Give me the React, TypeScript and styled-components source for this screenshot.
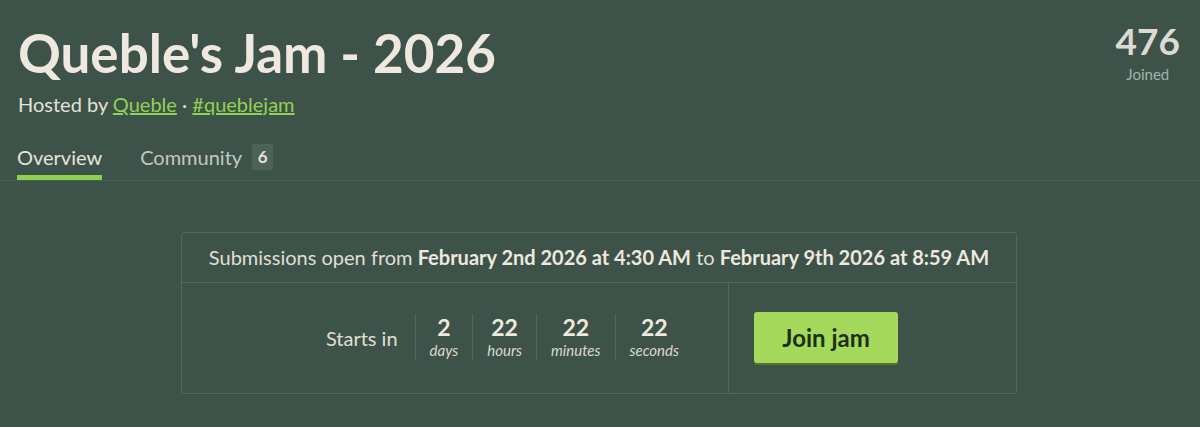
import styled, { createGlobalStyle } from "styled-components";

const GlobalStyle = createGlobalStyle`
    body {
        margin: 0;
        background-color: #3d5349;
        font-family: Lato, "Open Sans", sans-serif;
        color: #e6e1d8;
    }
`;

const Page = styled.div`
    min-height: 427px;
    background-color: #3d5349;
`;

const Top = styled.div`
    display: flex;
    justify-content: space-between;
    align-items: flex-start;
    padding: 21px 20px 0 18px;
`;

const Title = styled.h1`
    margin: 0;
    font-size: 53px;
    line-height: 1.2;
    font-weight: 700;
    color: #eee8df;
`;

const Hosted = styled.div`
    margin-top: 7px;
    font-size: 20px;
    line-height: 24px;
    color: #e6e1d8;
`;

const Link = styled.a`
    color: #93d053;
    text-decoration: underline;
`;

const Joined = styled.div`
    display: flex;
    flex-direction: column;
    align-items: center;
`;

const JoinedNum = styled.div`
    font-size: 37px;
    line-height: 40px;
    font-weight: 700;
    color: #dedad2;
`;

const JoinedLabel = styled.div`
    margin-top: 4px;
    font-size: 15px;
    line-height: 18px;
    color: #a6b1aa;
`;

const Tabs = styled.div`
    display: flex;
    gap: 38px;
    margin-top: 28px;
    padding-left: 17px;
    border-bottom: 1px solid #4b6056;
`;

const Tab = styled.div<{ $active?: boolean }>`
    display: flex;
    align-items: center;
    gap: 10px;
    font-size: 20px;
    line-height: 24px;
    padding-bottom: 5px;
    color: ${p => (p.$active ? "#e8e3da" : "#c3c8c1")};
    border-bottom: 5px solid ${p => (p.$active ? "#8fcf4f" : "transparent")};
`;

const Badge = styled.span`
    display: inline-flex;
    align-items: center;
    justify-content: center;
    width: 21px;
    height: 26px;
    border-radius: 2px;
    background-color: #4d6358;
    font-size: 17px;
    font-weight: 700;
    color: #e6e1d8;
`;

const Box = styled.div`
    width: 834px;
    margin: 51px 0 0 181px;
    border: 1px solid #536960;
    border-radius: 3px;
`;

const BoxHeader = styled.div`
    height: 49px;
    display: flex;
    align-items: center;
    justify-content: center;
    border-bottom: 1px solid #536960;
    font-size: 20px;
    color: #e3ded5;

    b {
        font-weight: 700;
        color: #eee8df;
    }
`;

const BoxBody = styled.div`
    display: flex;
    height: 110px;
`;

const CountCell = styled.div`
    width: 547px;
    border-right: 1px solid #536960;
    display: flex;
    align-items: center;
    justify-content: flex-end;
    padding-right: 35px;
    box-sizing: border-box;
`;

const StartsIn = styled.div`
    font-size: 20px;
    margin-right: 17px;
    color: #e3ded5;
`;

const Unit = styled.div`
    display: flex;
    flex-direction: column;
    align-items: center;
    padding: 0 14px;
    border-left: 1px solid #55685e;
`;

const Num = styled.div`
    font-size: 23px;
    line-height: 26px;
    font-weight: 700;
    color: #eee8df;
`;

const Label = styled.div`
    font-size: 15px;
    line-height: 21px;
    font-style: italic;
    color: #dcd8cf;
`;

const ActionCell = styled.div`
    flex: 1;
    display: flex;
    align-items: center;
    padding-left: 25px;
`;

const JoinButton = styled.button`
    width: 144px;
    height: 51px;
    border: none;
    border-radius: 3px;
    background-color: #a4d95c;
    box-shadow: 0 2px 0 #4f7a2c;
    font-family: Lato, "Open Sans", sans-serif;
    font-size: 24px;
    font-weight: 700;
    color: #1d3014;
    cursor: pointer;
`;

const units = [
    { value: "2", label: "days" },
    { value: "22", label: "hours" },
    { value: "22", label: "minutes" },
    { value: "22", label: "seconds" },
];

export default function App() {
    return (
        <Page>
            <GlobalStyle />
            <Top>
                <div>
                    <Title>Queble's Jam - 2026</Title>
                    <Hosted>
                        Hosted by <Link href="#">Queble</Link> · <Link href="#">#queblejam</Link>
                    </Hosted>
                </div>
                <Joined>
                    <JoinedNum>476</JoinedNum>
                    <JoinedLabel>Joined</JoinedLabel>
                </Joined>
            </Top>
            <Tabs>
                <Tab $active>Overview</Tab>
                <Tab>
                    Community <Badge>6</Badge>
                </Tab>
            </Tabs>
            <Box>
                <BoxHeader>
                    <span>
                        Submissions open from <b>February 2nd 2026 at 4:30 AM</b> to{" "}
                        <b>February 9th 2026 at 8:59 AM</b>
                    </span>
                </BoxHeader>
                <BoxBody>
                    <CountCell>
                        <StartsIn>Starts in</StartsIn>
                        {units.map(u => (
                            <Unit key={u.label}>
                                <Num>{u.value}</Num>
                                <Label>{u.label}</Label>
                            </Unit>
                        ))}
                    </CountCell>
                    <ActionCell>
                        <JoinButton>Join jam</JoinButton>
                    </ActionCell>
                </BoxBody>
            </Box>
        </Page>
    );
}
